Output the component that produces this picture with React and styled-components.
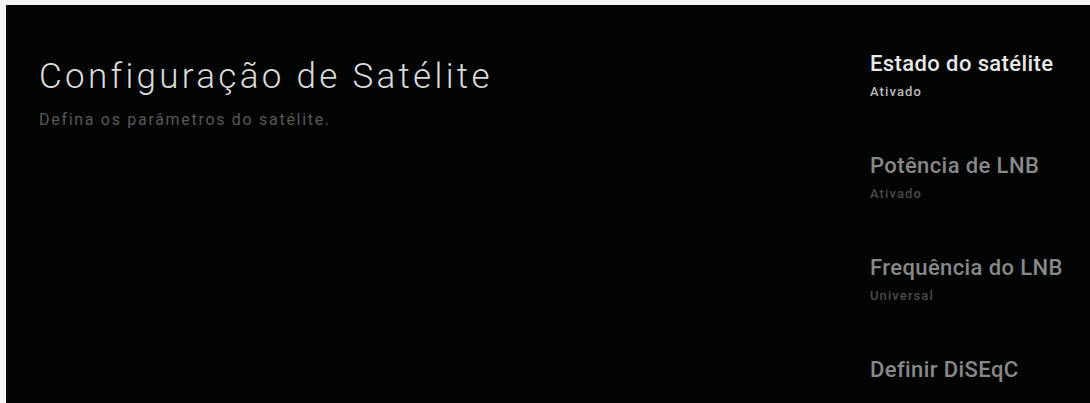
import React from 'react'
import styled, { createGlobalStyle } from 'styled-components'

const GlobalStyle = createGlobalStyle`
    html, body {
        margin: 0;
        padding: 0;
        background: #ffffff;
    }
    body {
        font-family: Roboto, 'Noto Sans', sans-serif;
    }
`

const items = [
    { id: 1, title: 'Estado do satélite', value: 'Ativado', active: true },
    { id: 2, title: 'Potência de LNB', value: 'Ativado' },
    { id: 3, title: 'Frequência do LNB', value: 'Universal' },
    { id: 4, title: 'Definir DiSEqC' },
]

function App() {
    return (
        <>
            <GlobalStyle />
            <Frame>
                <Screen>
                    <Header>
                        <Title>Configuração de Satélite</Title>
                        <Subtitle>Defina os parâmetros do satélite.</Subtitle>
                    </Header>
                    <Menu>
                        {items.map((item) => (
                            <MenuItem key={item.id}>
                                <ItemTitle $active={item.active}>{item.title}</ItemTitle>
                                {item.value && (
                                    <ItemValue $active={item.active}>{item.value}</ItemValue>
                                )}
                            </MenuItem>
                        ))}
                    </Menu>
                </Screen>
            </Frame>
        </>
    )
}

export default App

const Frame = styled.div`
    width: 1090px;
    height: 403px;
    box-sizing: border-box;
    padding: 5px 0 0 6px;
    background: #f4f4f4;
    overflow: hidden;
`

const Screen = styled.div`
    height: 100%;
    display: flex;
    justify-content: space-between;
    background: #020303;
    box-sizing: border-box;
    padding: 0 0 0 33px;
    overflow: hidden;
`

const Header = styled.div`
    display: flex;
    flex-direction: column;
    padding-top: 50px;
`

const Title = styled.h1`
    margin: 0;
    font-family: Roboto, sans-serif;
    font-weight: 300;
    font-size: 35px;
    line-height: 44px;
    letter-spacing: 3.3px;
    color: #dadada;
    white-space: nowrap;
`

const Subtitle = styled.p`
    margin: 11px 0 0;
    font-family: Roboto, sans-serif;
    font-size: 16px;
    line-height: 20px;
    letter-spacing: 1.7px;
    color: #585858;
    white-space: nowrap;
`

const Menu = styled.ul`
    list-style: none;
    margin: 0;
    padding: 45px 0 0 0;
    width: 220px;
    flex-shrink: 0;
    display: flex;
    flex-direction: column;
`

const MenuItem = styled.li`
    height: 102px;
    flex-shrink: 0;
    display: flex;
    flex-direction: column;
`

const ItemTitle = styled.span`
    font-family: Roboto, sans-serif;
    font-weight: 500;
    font-size: 22px;
    line-height: 28px;
    letter-spacing: 0.4px;
    color: ${(p) => (p.$active ? '#e8e8e8' : '#888888')};
    white-space: nowrap;
`

const ItemValue = styled.span`
    margin-top: 6px;
    font-family: Roboto, sans-serif;
    font-weight: 500;
    font-size: 13px;
    line-height: 16px;
    letter-spacing: 1.1px;
    color: ${(p) => (p.$active ? '#bdbdbd' : '#4a4a4a')};
    white-space: nowrap;
`
